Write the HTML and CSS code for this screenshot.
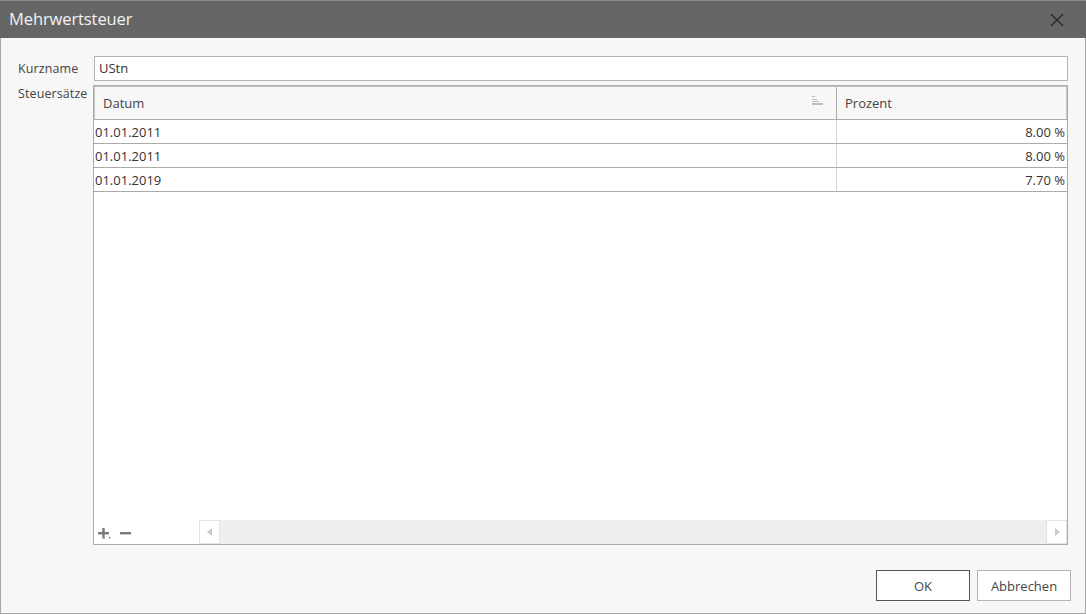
FILE: index.html
```html
<!DOCTYPE html>
<html lang="de">
<head>
<meta charset="utf-8">
<title>Mehrwertsteuer</title>
<link rel="stylesheet" href="styles.css">
</head>
<body>
<div class="window">
  <div class="titlebar">
    <span class="title">Mehrwertsteuer</span>
    <svg class="close" width="14" height="14" viewBox="0 0 14 14"><path d="M1 1L13 13M13 1L1 13" stroke="#2f2f2f" stroke-width="1.6" fill="none"/></svg>
  </div>
  <div class="content">
    <div class="form">
      <label class="label">Kurzname</label>
      <div class="input">UStn</div>
      <label class="label label-top">Steuersätze</label>
      <div class="grid">
        <div class="grid-header">
          <div class="hcell hcell-date">
            <span>Datum</span>
            <svg class="sort" width="11" height="10" viewBox="0 0 11 10"><g fill="#bdbdbd"><rect x="0" y="0" width="3" height="1"/><rect x="0" y="3" width="5" height="1"/><rect x="0" y="5" width="7" height="1"/><rect x="0" y="7" width="11" height="2"/></g></svg>
          </div>
          <div class="hcell hcell-pct">Prozent</div>
        </div>
        <div class="grid-body">
          <div class="row"><div class="cell cell-date">01.01.2011</div><div class="cell cell-pct">8.00 %</div></div>
          <div class="row"><div class="cell cell-date">01.01.2011</div><div class="cell cell-pct">8.00 %</div></div>
          <div class="row"><div class="cell cell-date">01.01.2019</div><div class="cell cell-pct">7.70 %</div></div>
        </div>
        <div class="grid-footer">
          <div class="tools">
            <svg width="14" height="12" viewBox="0 0 14 12"><g fill="#7a7a7a"><rect x="0" y="5" width="11" height="2.4"/><rect x="4.3" y="1" width="2.4" height="10.5"/><rect x="11" y="10" width="1.5" height="1.5"/></g></svg>
            <svg width="12" height="12" viewBox="0 0 12 12"><rect x="0" y="5" width="11" height="2.4" fill="#7a7a7a"/></svg>
          </div>
          <div class="hscroll">
            <div class="sbtn"><svg width="6" height="8" viewBox="0 0 6 8"><path d="M5 0L0 4L5 8Z" fill="#c8c8c8"/></svg></div>
            <div class="track"></div>
            <div class="sbtn"><svg width="6" height="8" viewBox="0 0 6 8"><path d="M1 0L6 4L1 8Z" fill="#c8c8c8"/></svg></div>
          </div>
        </div>
      </div>
    </div>
    <div class="buttons">
      <button class="btn btn-default">OK</button>
      <button class="btn">Abbrechen</button>
    </div>
  </div>
</div>
</body>
</html>
```
FILE: styles.css
```css
* { box-sizing: border-box; }
html, body { margin: 0; padding: 0; }
body {
  font-family: "Open Sans", "Noto Sans", sans-serif;
  font-size: 13px;
  color: #333;
  background: #fff;
}
.window {
  width: 1086px;
  height: 614px;
  border: 1px solid #a6a6a6;
  border-top: none;
  background: #f7f7f7;
  display: flex;
  flex-direction: column;
}
.titlebar {
  height: 38px;
  background: #666666;
  margin: 0 -1px;
  display: flex;
  align-items: center;
  justify-content: space-between;
  padding: 0 22px 0 9px;
  border-top: 1px solid #8a8a8a;
}
.title {
  color: #f2f2f2;
  font-size: 16.5px;
  letter-spacing: -0.1px;
  margin-top: -2px;
}
.close { display: block; }
.content {
  flex: 1;
  display: flex;
  flex-direction: column;
  padding: 18px 14px 12px 17px;
}
.form {
  display: grid;
  grid-template-columns: 76px 1fr;
  grid-template-rows: 25px 460px;
  row-gap: 4px;
  padding-right: 3px;
}
.label {
  color: #444;
  font-size: 12.5px;
  align-self: center;
  white-space: nowrap;
  letter-spacing: 0.1px;
}
.label-top { align-self: start; margin-top: 0; }
.input {
  background: #fff;
  border: 1px solid #b4b4b4;
  height: 25px;
  padding: 0 4px;
  line-height: 23px;
  font-size: 13px;
  color: #333;
}
.grid {
  margin-left: -1px;
  border: 1px solid #ababab;
  background: #fff;
  display: flex;
  flex-direction: column;
}
.grid-header {
  display: flex;
  height: 34px;
  background: #f7f7f7;
  border: 1px solid #c4c4c4;
  border-bottom: 1px solid #ababab;
}
.hcell {
  display: flex;
  align-items: center;
  color: #444;
  padding-left: 8px;
}
.hcell-date {
  width: 742px;
  border-right: 1px solid #ababab;
  justify-content: space-between;
  padding-right: 13px;
}
.sort { margin-top: -4px; }
.hcell-pct { flex: 1; }
.grid-body { flex: 1; }
.row {
  display: flex;
  height: 24px;
  border-bottom: 1px solid #ababab;
}
.cell {
  line-height: 23px;
  padding-top: 1px;
  color: #333;
}
.cell-date {
  width: 743px;
  padding-left: 1px;
  border-right: 1px solid #d4d4d4;
}
.cell-pct {
  flex: 1;
  text-align: right;
  padding-right: 2px;
}
.grid-footer {
  height: 24px;
  display: flex;
  align-items: stretch;
}
.tools {
  width: 105px;
  display: flex;
  align-items: center;
  gap: 8px;
  padding-left: 4px;
  padding-top: 2px;
}
.tools svg { display: block; }
.hscroll {
  flex: 1;
  display: flex;
  background: #eeeeee;
}
.sbtn {
  width: 21px;
  background: #fff;
  border: 1px solid #e2e2e2;
  display: flex;
  align-items: center;
  justify-content: center;
}
.track { flex: 1; }
.buttons {
  margin-top: auto;
  display: flex;
  justify-content: flex-end;
  gap: 7px;
}
.btn {
  width: 94px;
  height: 31px;
  background: #fff;
  border: 1px solid #b4b4b4;
  font-family: "Open Sans", "Noto Sans", sans-serif;
  font-size: 13px;
  color: #444;
  padding: 0;
}
.btn-default { border-color: #555; }
```
